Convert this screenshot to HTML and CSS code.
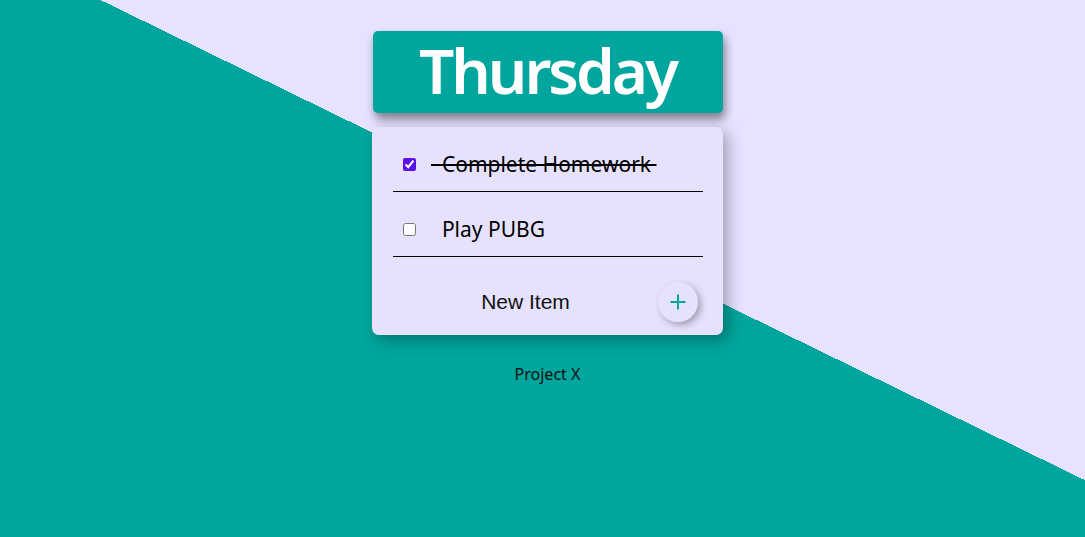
FILE: index.html
```html
<!DOCTYPE html>
<html lang="en">
<head>
<meta charset="utf-8">
<title>To-Do List</title>
<link rel="stylesheet" href="styles.css">
</head>
<body>
<div class="page">
  <div class="heading">
    <h1>Thursday</h1>
  </div>
  <div class="box">
    <div class="item">
      <input type="checkbox" class="check" checked>
      <p class="task done">&nbsp;&nbsp;Complete Homework&nbsp;</p>
    </div>
    <div class="item">
      <input type="checkbox" class="check">
      <p class="task">&nbsp;&nbsp;Play PUBG</p>
    </div>
    <form class="add">
      <input type="text" class="new" placeholder="New Item" autocomplete="off">
      <button type="button" class="plus" aria-label="Add">
        <svg width="18" height="18" viewBox="0 0 18 18"><path d="M9 1.5V16.5M1.5 9H16.5" stroke="#00a49c" stroke-width="2" fill="none"/></svg>
      </button>
    </form>
  </div>
  <footer class="footer">Project X</footer>
</div>
</body>
</html>
```

FILE: styles.css
```css
html {
  height: 100%;
}

body {
  margin: 0;
  min-height: 100%;
  background: linear-gradient(26deg, #00a59d 54.96%, #e6e2ff 54.96%);
  font-family: "Noto Sans", "Open Sans", sans-serif;
}

.page {
  display: flex;
  flex-direction: column;
  align-items: center;
  padding: 31px 0 0 10px;
}

.heading {
  width: 350px;
  height: 82px;
  background: #00a59d;
  border-radius: 5px;
  box-shadow: 2px 6px 10px rgba(0, 0, 0, 0.45);
  display: flex;
  align-items: center;
  justify-content: center;
}

.heading h1 {
  margin: 0;
  color: #ffffff;
  font-family: "Noto Sans", sans-serif;
  font-weight: 600;
  font-size: 62px;
  letter-spacing: -3px;
  line-height: 1;
  padding-bottom: 4px;
}

.box {
  width: 351px;
  margin-top: 14px;
  background: #e6e2fe;
  border-radius: 7px;
  box-shadow: 5px 5px 15px rgba(0, 0, 0, 0.3);
  padding: 0 20px 0 21px;
  box-sizing: border-box;
}

.item {
  display: flex;
  align-items: center;
  height: 65px;
  padding: 10px 0 0 10px;
  box-sizing: border-box;
  border-bottom: 1px solid #000000;
}

.check {
  width: 13px;
  height: 13px;
  margin: 0;
  accent-color: #5a12e6;
}

.task {
  margin: 0 0 0 15px;
  font-size: 21px;
  color: #000000;
}

.done {
  text-decoration: line-through;
}

.add {
  display: flex;
  align-items: center;
  padding: 25px 5px 13px 0;
  margin: 0;
}

.new {
  flex: 1;
  min-width: 0;
  border: none;
  outline: none;
  background: transparent;
  font-family: "Liberation Sans", Arial, sans-serif;
  font-size: 21px;
  text-align: center;
  padding: 0;
  height: 40px;
}

.new::placeholder {
  color: #111111;
}

.plus {
  width: 40px;
  height: 40px;
  border: none;
  border-radius: 50%;
  background: #e6e2fe;
  box-shadow: 3px 3px 7px rgba(0, 0, 0, 0.3);
  display: flex;
  align-items: center;
  justify-content: center;
  padding: 0;
}

.footer {
  margin-top: 28px;
  font-size: 16px;
  color: #111111;
}
```
